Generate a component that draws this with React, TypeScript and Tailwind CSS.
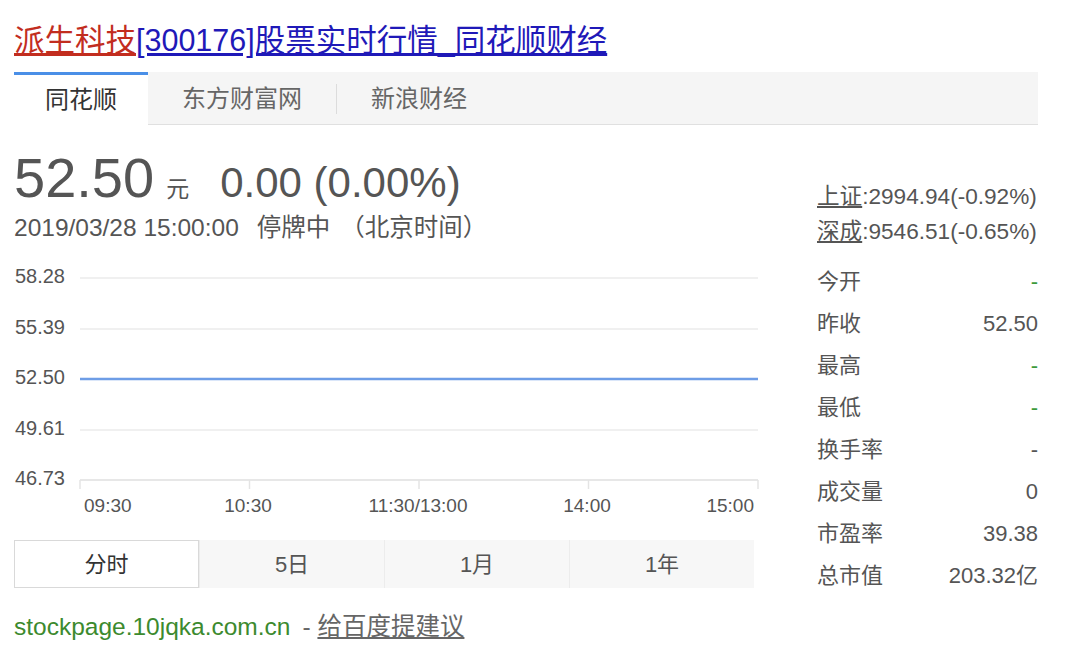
import React, { useState } from 'react';

const FONT = { fontFamily: '"Liberation Sans", "Noto Sans CJK SC", sans-serif' };

const stats: { label: string; value: string; green?: boolean }[] = [
  { label: '今开', value: '-', green: true },
  { label: '昨收', value: '52.50' },
  { label: '最高', value: '-', green: true },
  { label: '最低', value: '-', green: true },
  { label: '换手率', value: '-' },
  { label: '成交量', value: '0' },
  { label: '市盈率', value: '39.38' },
  { label: '总市值', value: '203.32亿' },
];

const sources = ['同花顺', '东方财富网', '新浪财经'];
const ranges = ['分时', '5日', '1月', '1年'];

const yLabels = [
  { v: '58.28', y: 15 },
  { v: '55.39', y: 66 },
  { v: '52.50', y: 116 },
  { v: '49.61', y: 167 },
  { v: '46.73', y: 217 },
];

const ticks = [66, 235.5, 405, 574.5, 744];

function PriceChart() {
  return (
    <svg width="745" height="258" className="block" style={FONT}>
      {yLabels.map((l) => (
        <g key={l.v}>
          <line x1="66" x2="744" y1={l.y} y2={l.y} stroke="#ebebeb" strokeWidth="1.5" />
          <text x="51" y={l.y - 2} dy="0.35em" textAnchor="end" fontSize="20" fill="#555">
            {l.v}
          </text>
        </g>
      ))}
      <line x1="66" x2="744" y1="217" y2="217" stroke="#e4e4e4" strokeWidth="1.5" />
      {ticks.map((x) => (
        <line key={x} x1={x} x2={x} y1="217" y2="226" stroke="#e4e4e4" strokeWidth="1.5" />
      ))}
      {/* 停牌：全天价格不变 */}
      <line x1="66" x2="744" y1="116" y2="116" stroke="#6e9de6" strokeWidth="2.5" />
      <text x="70" y="242" dy="0.35em" fontSize="19" fill="#555">09:30</text>
      <text x="234" y="242" dy="0.35em" textAnchor="middle" fontSize="19" fill="#555">10:30</text>
      <text x="404" y="242" dy="0.35em" textAnchor="middle" fontSize="19" fill="#555">11:30/13:00</text>
      <text x="573" y="242" dy="0.35em" textAnchor="middle" fontSize="19" fill="#555">14:00</text>
      <text x="740" y="242" dy="0.35em" textAnchor="end" fontSize="19" fill="#555">15:00</text>
    </svg>
  );
}

export default function App() {
  const [source, setSource] = useState(0);
  const [range, setRange] = useState(0);

  return (
    <div className="w-[1080px] h-[657px] overflow-hidden bg-white pl-[14px] pr-[42px] pt-5" style={FONT}>
      <h1 className="text-[30.5px] leading-[40px] font-normal whitespace-nowrap">
        <a href="#" className="underline text-[#c22d1f]">派生科技</a>
        <a href="#" className="underline text-[#1f19b8]">[300176]股票实时行情_同花顺财经</a>
      </h1>

      {/* 数据来源切换 */}
      <div className="mt-3 h-[53px] flex bg-[#f5f5f5] border-b border-[#e0e0e0]">
        {sources.map((s, i) => (
          <button
            key={s}
            onClick={() => setSource(i)}
            className={`h-[53px] flex items-center text-[24px] ${
              source === i
                ? 'w-[134px] justify-center bg-white border-t-[3px] border-[#4a8fe7] text-[#333] -mb-px'
                : 'px-[34px] text-[#666]'
            }`}
          >
            {i === 2 && <span className="w-px h-[30px] bg-[#dcdcdc] -ml-[34px] mr-[34px]" />}
            {s}
          </button>
        ))}
      </div>

      <div className="flex">
        <div className="w-[745px]">
          <div className="mt-[25px] flex items-baseline text-[#555] whitespace-nowrap">
            <span className="text-[56px] leading-[56px]">52.50</span>
            <span className="text-[23px] ml-3">元</span>
            <span className="text-[42px] ml-[31px]">0.00 (0.00%)</span>
          </div>
          <div className="mt-[-2px] text-[24.5px] leading-[32px] text-[#555] whitespace-nowrap">
            2019/03/28 15:00:00<span className="ml-[18px]">停牌中</span>
            <span className="ml-[10px]">（北京时间）</span>
          </div>

          <div className="mt-[19px]">
            <PriceChart />
          </div>

          <div className="mt-[19px] w-[740px] h-[48px] grid grid-cols-4 bg-[#f7f7f7]">
            {ranges.map((r, i) => (
              <button
                key={r}
                onClick={() => setRange(i)}
                className={`flex items-center justify-center text-[22px] ${
                  range === i
                    ? 'bg-white border border-[#d9d9d9] text-[#333]'
                    : 'text-[#555] border-l border-[#ececec]'
                }`}
              >
                {r}
              </button>
            ))}
          </div>

          <div className="mt-[24px] text-[24.5px] leading-[30px] whitespace-nowrap">
            <span className="text-[#3c8a2e]">stockpage.10jqka.com.cn</span>
            <span className="text-[#666] ml-3">- </span>
            <a href="#" className="text-[#666] underline">给百度提建议</a>
          </div>
        </div>

        <div className="ml-[58px] w-[221px] mt-[54px] text-[22px] text-[#555]">
          <div className="leading-[35px] whitespace-nowrap text-[22.6px]">
            <a href="#" className="underline">上证</a>:2994.94(-0.92%)
          </div>
          <div className="leading-[35px] whitespace-nowrap text-[22.6px]">
            <a href="#" className="underline">深成</a>:9546.51(-0.65%)
          </div>
          <div className="mt-[11px]">
            {stats.map((s) => (
              <div key={s.label} className="h-[42px] flex items-center justify-between">
                <span>{s.label}</span>
                <span className={s.green ? 'text-[#3c9a3c]' : ''}>{s.value}</span>
              </div>
            ))}
          </div>
        </div>
      </div>
    </div>
  );
}
